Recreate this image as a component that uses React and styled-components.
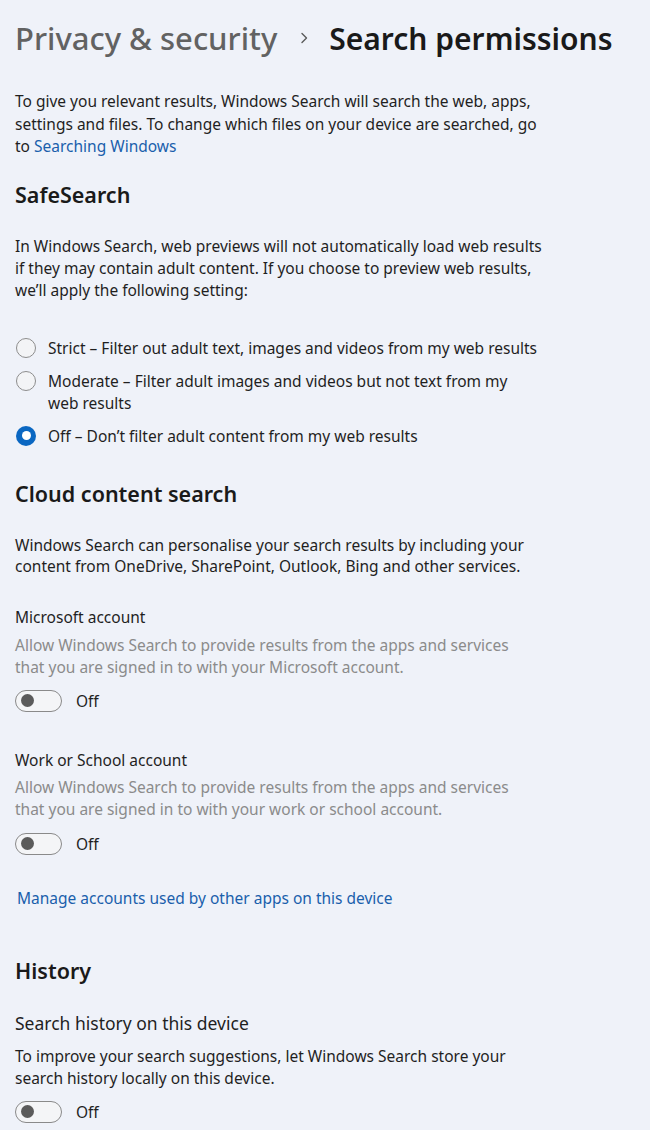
import styled, { createGlobalStyle } from "styled-components"

const Global = createGlobalStyle`
  html, body {
    margin: 0;
    background: #eff2f9;
  }
  body {
    font-family: "Noto Sans", "Open Sans", sans-serif;
    color: #1b1b1b;
    -webkit-font-smoothing: antialiased;
  }
`

const Page = styled.div`
  width: 650px;
  min-height: 1130px;
  padding: 18px 15px 0 15px;
  box-sizing: border-box;
  background: #eff2f9;
  overflow: hidden;
`

const Breadcrumb = styled.h1`
  display: flex;
  align-items: center;
  margin: 0;
  height: 40px;
  font-weight: 500;
  white-space: nowrap;
`

const Crumb = styled.span`
  color: ${(p) => (p.$current ? "#1a1a1a" : "#626262")};
  font-weight: ${(p) => (p.$current ? 600 : 500)};
  font-size: ${(p) => (p.$current ? 30 : 31)}px;
`

const Chevron = styled.svg`
  width: 10px;
  height: 14px;
  margin: 0 20px 0 22px;
`

const Text = styled.p`
  margin: ${(p) => p.$top || 0}px 0 0 0;
  font-size: 15.5px;
  line-height: ${(p) => p.$lh || 22}px;
  color: ${(p) => (p.$muted ? "#8b8b8b" : "#1f1f1f")};
  max-width: ${(p) => p.$max || 535}px;
`

const Link = styled.a`
  color: #1a5fac;
  text-decoration: none;
`

const LinkLine = styled.div`
  margin-top: ${(p) => p.$top}px;
  padding-left: 2px;
  font-size: 15.5px;
  line-height: 22px;
`

const Heading = styled.h2`
  margin: ${(p) => p.$top}px 0 0 0;
  font-size: 21.5px;
  line-height: ${(p) => p.$lh || 28}px;
  font-weight: 600;
  color: #1a1a1a;
`

const Label = styled.div`
  margin-top: ${(p) => p.$top}px;
  font-size: ${(p) => p.$size || 15.5}px;
  line-height: ${(p) => p.$lh || 22}px;
  color: #1f1f1f;
`

const RadioGroup = styled.div`
  display: flex;
  flex-direction: column;
  gap: 11px;
  margin-top: 36px;
`

const RadioRow = styled.label`
  display: flex;
  align-items: flex-start;
  gap: 12px;
  font-size: 15.5px;
  line-height: 22px;
  color: #1f1f1f;
  padding-left: 1px;
  max-width: 524px;
`

const RadioCircle = styled.span`
  flex: none;
  width: 20px;
  height: 20px;
  margin-top: 1px;
  border-radius: 50%;
  box-sizing: border-box;
  display: flex;
  align-items: center;
  justify-content: center;
  border: ${(p) => (p.$checked ? "none" : "1px solid #8d8d8d")};
  background: ${(p) => (p.$checked ? "#0a67c2" : "#f3f4f6")};

  &::after {
    content: "";
    display: ${(p) => (p.$checked ? "block" : "none")};
    width: 9px;
    height: 9px;
    border-radius: 50%;
    background: #ffffff;
  }
`

const ToggleRow = styled.div`
  display: flex;
  align-items: center;
  gap: 14px;
  margin-top: ${(p) => p.$top}px;
  height: 24px;
`

const Track = styled.span`
  position: relative;
  width: 47px;
  height: 22px;
  border-radius: 12px;
  border: 1px solid #8a8a8a;
  background: #f4f5f7;
  box-sizing: border-box;

  &::after {
    content: "";
    position: absolute;
    left: 5px;
    top: 50%;
    width: 13px;
    height: 13px;
    margin-top: -6.5px;
    border-radius: 50%;
    background: #5b5b5b;
  }
`

const ToggleText = styled.span`
  font-size: 15.5px;
  color: #1f1f1f;
`

const Toggle = ({ top }) => (
  <ToggleRow $top={top}>
    <Track />
    <ToggleText>Off</ToggleText>
  </ToggleRow>
)

const options = [
  { text: "Strict – Filter out adult text, images and videos from my web results" },
  { text: "Moderate – Filter adult images and videos but not text from my web results" },
  { text: "Off – Don’t filter adult content from my web results", checked: true },
]

export default function App() {
  return (
    <Page>
      <Global />
      <Breadcrumb>
        <Crumb>Privacy &amp; security</Crumb>
        <Chevron viewBox="0 0 10 14">
          <path d="M3 2.5 L7.5 7 L3 11.5" fill="none" stroke="#5a5a5a" strokeWidth="1.4" strokeLinecap="round" strokeLinejoin="round" />
        </Chevron>
        <Crumb $current>Search permissions</Crumb>
      </Breadcrumb>

      <Text $top={32} $lh={22.5} $max={530}>
        To give you relevant results, Windows Search will search the web, apps,
        settings and files. To change which files on your device are searched, go
        to <Link href="#">Searching Windows</Link>
      </Text>

      <Heading $top={23}>SafeSearch</Heading>
      <Text $top={26}>
        In Windows Search, web previews will not automatically load web results
        if they may contain adult content. If you choose to preview web results,
        we’ll apply the following setting:
      </Text>

      <RadioGroup>
        {options.map((o) => (
          <RadioRow key={o.text}>
            <RadioCircle $checked={o.checked} />
            <span>{o.text}</span>
          </RadioRow>
        ))}
      </RadioGroup>

      <Heading $top={33}>Cloud content search</Heading>
      <Text $top={27} $lh={21.5}>
        Windows Search can personalise your search results by including your
        content from OneDrive, SharePoint, Outlook, Bing and other services.
      </Text>

      <Label $top={28}>Microsoft account</Label>
      <Text $top={6} $muted $max={512}>
        Allow Windows Search to provide results from the apps and services that
        you are signed in to with your Microsoft account.
      </Text>
      <Toggle top={11} />

      <Label $top={36}>Work or School account</Label>
      <Text $top={5} $muted $max={512}>
        Allow Windows Search to provide results from the apps and services that
        you are signed in to with your work or school account.
      </Text>
      <Toggle top={12} />

      <LinkLine $top={31}>
        <Link href="#">Manage accounts used by other apps on this device</Link>
      </LinkLine>

      <Heading $top={47} $lh={30}>History</Heading>
      <Label $top={25} $size={17.5} $lh={24}>Search history on this device</Label>
      <Text $top={10} $max={512}>
        To improve your search suggestions, let Windows Search store your search
        history locally on this device.
      </Text>
      <Toggle top={11} />
    </Page>
  )
}
